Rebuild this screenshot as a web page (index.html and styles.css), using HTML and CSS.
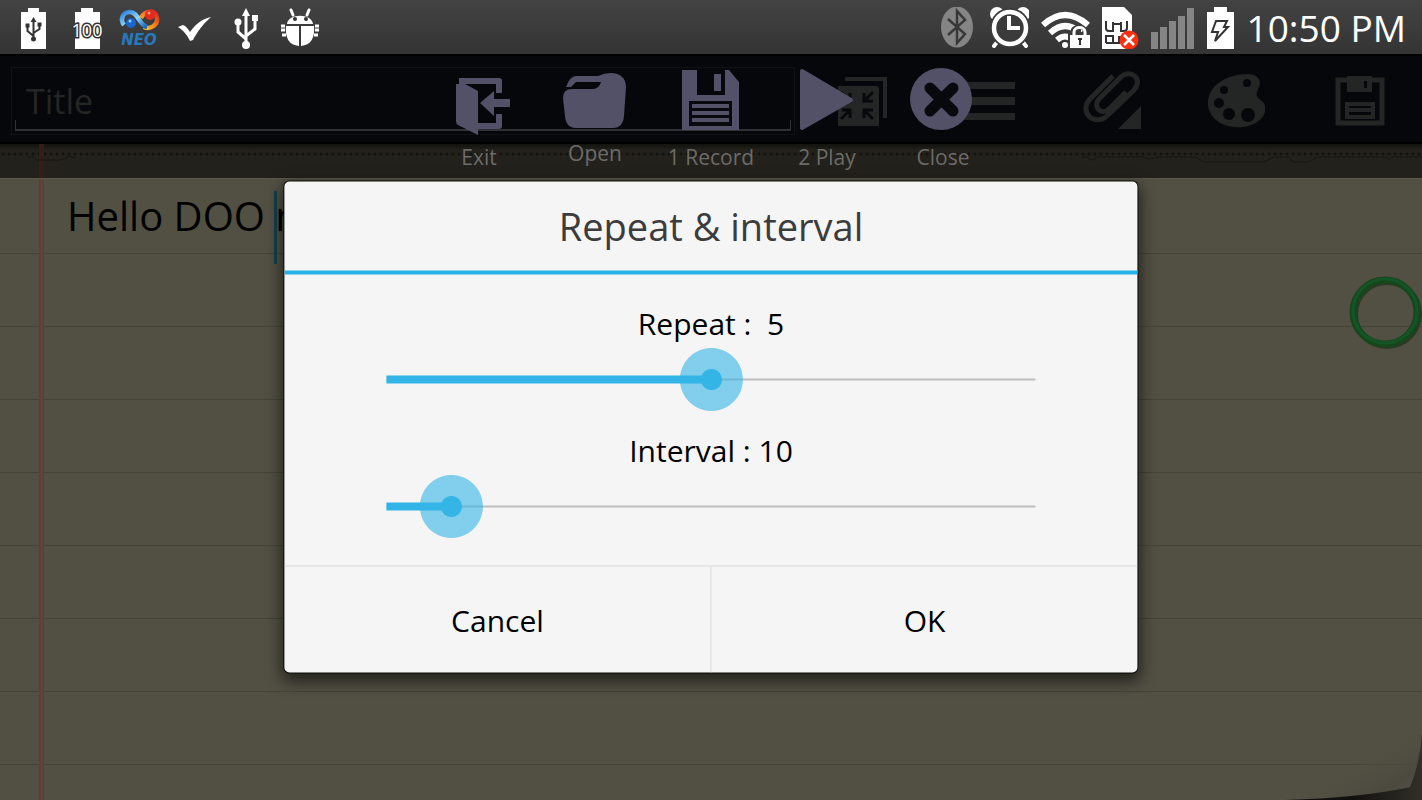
FILE: index.html
```
<!DOCTYPE html>
<html lang="en">
<head>
    <meta charset="UTF-8">
    <title>Repeat &amp; interval</title>
    <link rel="stylesheet" href="styles.css">
</head>
<body>

    <div class="status-bar">
        <div class="notifications">
            <svg width="53" height="42" viewBox="0 0 53 42">
                <path d="M21 1h11v4h7v37H14V5h7z" fill="#fff"/>
                <g stroke="#333" stroke-width="2" fill="none">
                    <path d="M26.500 13v19M26.500 29l-6-5v-5M26.500 26l6-4v-5"/>
                </g>
                <path d="M26.500 10l3 5h-6zM18.500 16.500h4v4h-4zM30.500 15.500h4v4h-4z" fill="#333"/>
                <circle cx="26.500" cy="32" r="2.500" fill="#333"/>
            </svg>
            <svg width="53" height="42" viewBox="0 0 53 42">
                <path d="M21 1h12v4h7v37H15V5h6z" fill="#fff"/>
                <text x="27" y="30" class="battery-text">100</text>
            </svg>
            <svg width="53" height="42" viewBox="0 0 53 42">
                <defs>
                    <linearGradient id="neoBlue" x1="0" y1="0" x2="1" y2="1">
                        <stop offset="0" stop-color="#2b7de0"/>
                        <stop offset="0.500" stop-color="#8fd8f5"/>
                        <stop offset="1" stop-color="#0b5fc0"/>
                    </linearGradient>
                    <linearGradient id="neoRed" x1="0" y1="1" x2="1" y2="0">
                        <stop offset="0" stop-color="#ffc928"/>
                        <stop offset="0.500" stop-color="#f58220"/>
                        <stop offset="1" stop-color="#e0201c"/>
                    </linearGradient>
                </defs>
                <path d="M28 11C32 3 43 2 44 11c1 7-7 12-13 9" fill="none" stroke="url(#neoRed)" stroke-width="4.500"/>
                <path d="M34 20C26 18 25 5 17 5 9 5 7 13 11 18" fill="none" stroke="url(#neoBlue)" stroke-width="4.500"/>
                <circle cx="18" cy="16" r="5" fill="#1767cc"/>
                <circle cx="37" cy="8" r="5" fill="#e52a1e"/>
                <circle cx="17" cy="14" r="1.500" fill="#8fd0ff"/>
                <circle cx="36" cy="6" r="1.500" fill="#ff9a80"/>
                <text x="26" y="38" class="neo-text">NEO</text>
            </svg>
            <svg width="53" height="42" viewBox="0 0 53 42">
                <path d="M12 20l5-2c3 1 5 4 7 7 5-7 11-13 21-15-7 6-14 15-18 23l-3 1c-3-6-6-10-12-14z" fill="#fff"/>
            </svg>
            <svg width="53" height="42" viewBox="0 0 53 42">
                <path d="M27 8v27M27 32l-8-7v-8M27 29l9-7v-9" fill="none" stroke="#fff" stroke-width="3"/>
                <path d="M27 1l4 8h-8zM33 8h6v6h-6z" fill="#fff"/>
                <circle cx="19" cy="15" r="3.500" fill="#fff"/>
                <circle cx="27" cy="38" r="4" fill="#fff"/>
            </svg>
            <svg width="53" height="42" viewBox="0 0 53 42">
                <path d="M15 17c1-11 25-11 26 0zM14 19h13v20C17 38 13 31 14 19zM29 19h13c1 12-3 19-13 20z" fill="#fff"/>
                <path d="M21 8l-2-5M35 8l2-5" stroke="#fff" stroke-width="3" stroke-linecap="round"/>
                <path d="M9 19h4M9 23h4M10 28h4M43 19h4M43 23h4M42 28h4" stroke="#fff" stroke-width="3"/>
                <circle cx="23" cy="12" r="2" fill="#333"/>
                <circle cx="34" cy="12" r="2" fill="#333"/>
            </svg>
        </div>
        <div class="system-icons">
            <svg width="35" height="42" viewBox="0 0 35 42">
                <ellipse cx="16" cy="20" rx="16" ry="20.500" fill="#858585"/>
                <path d="M7 12l17 15-8 9V4l8 9L7 28" fill="none" stroke="#383838" stroke-width="2.500"/>
            </svg>
            <svg width="41" height="42" viewBox="-1 1 41 42">
                <circle cx="8" cy="8" r="7" fill="#fff"/>
                <circle cx="34" cy="8" r="7" fill="#fff"/>
                <path d="M9 35l-4 5M33 35l4 5" stroke="#fff" stroke-width="4" stroke-linecap="round"/>
                <circle cx="21" cy="22" r="20" fill="#3b3b3b"/>
                <circle cx="21" cy="22" r="16" fill="none" stroke="#fff" stroke-width="4.500"/>
                <path d="M20 10v12h11" fill="none" stroke="#fff" stroke-width="4"/>
            </svg>
            <svg width="49" height="42" viewBox="0 0 49 42">
                <path d="M2 18Q24-2 47 18M9 26q15-14 31 0M16 33q8-7 16 0" fill="none" stroke="#fff" stroke-width="6"/>
                <circle cx="24" cy="38" r="3" fill="#fff"/>
                <path d="M27 25h3v-3q5-7 10-1v4h9v17H27z" fill="#3b3b3b"/>
                <path d="M33 29v-4c0-6 11-6 11 0v4" fill="none" stroke="#fff" stroke-width="3"/>
                <path d="M29 28h20v13H29z" fill="#fff"/>
                <path d="M37 32h4M39 32v6" stroke="#333" stroke-width="2"/>
            </svg>
            <svg width="37" height="42" viewBox="0 0 37 42">
                <path d="M0 0h22l8 8v34H0z" fill="#fff"/>
                <path d="M4 14v7q0 3 3 3h4v-9M9 15M11 17h8M25 14v7q0 3-3 3h-3v-9M4 36v-7h7v7H4M11 36h6v-6h5" fill="none" stroke="#333" stroke-width="2"/>
                <circle cx="27" cy="33" r="9.500" fill="#fa3110"/>
                <path d="M22 28l10 10M32 28L22 38" stroke="#fff" stroke-width="2.500"/>
            </svg>
            <svg width="44" height="42" viewBox="0 0 44 42">
                <path d="M0 25h7v17H0zM9 20h7v22H9zM18 14h7v28h-7zM27 9h7v33h-7zM36 1h7v41h-7z" fill="#858585"/>
            </svg>
            <svg width="27" height="42" viewBox="0 0 27 42">
                <path d="M7 0h13v5h7v37H0V5h7z" fill="#fff"/>
                <path d="M9 14h11l-3 6h4L8 34l3-9H5z" fill="none" stroke="#333" stroke-width="2"/>
            </svg>
            <span class="time">10:50 PM</span>
        </div>
    </div>

    <div class="app">
        <div class="app-bar">
            <div class="title-box">
                <input type="text" class="title-input" placeholder="Title" aria-label="Title">
            </div>
            <div class="app-actions">
                <button aria-label="Collapse">
                    <svg width="50" height="50" viewBox="2 0 50 50">
                        <path d="M2 10h38q3 0 3 3v35q0 3-3 3H4q-3 0-3-3V12z" fill="#242525"/>
                        <path d="M9 3h40v39" fill="none" stroke="#242525" stroke-width="4"/>
                        <path d="M5 16l8 8M14 17v8H6M37 16l-8 8M28 17v8h9M5 43l8-8M14 42v-8H6M37 43l-8-8M28 42v-8h9" fill="none" stroke="#08090c" stroke-width="3"/>
                    </svg>
                </button>
                <button aria-label="Menu">
                    <svg width="58" height="50" viewBox="0 0 58 50">
                        <path d="M5 6h52v7H5zM5 21h52v8H5zM5 37h52v7H5z" fill="#242525"/>
                    </svg>
                </button>
                <button aria-label="Attach">
                    <svg width="60" height="60" viewBox="0 0 60 60">
                        <path d="M31 5L8 28C-4 41 13 57 26 44l26-25C62 8 48-3 39 6L17 28c-7 8 3 17 10 10l17-17" fill="none" stroke="#242525" stroke-width="5"/>
                        <path d="M59 35v23H36z" fill="#242525"/>
                    </svg>
                </button>
                <button aria-label="Colours">
                    <svg width="58" height="58" viewBox="0 0 58 58">
                        <path fill-rule="evenodd" fill="#242525" d="M41 2c9 0 14 6 11 13-4 8-3 10 3 14 8 7 2 23-19 26C14 57 1 45 1 31 1 14 19 2 41 2zM40 7a4 4 0 1 0 0 8a4 4 0 1 0 0-8zM17 14a4 4 0 1 0 0 8a4 4 0 1 0 0-8zM12 26a5 5 0 1 0 0 10a5 5 0 1 0 0-10zM22 36a6 6 0 1 0 0 12a6 6 0 1 0 0-12zM41 36a7 7 0 1 0 0 14a7 7 0 1 0 0-14z"/>
                    </svg>
                </button>
                <button aria-label="Save">
                    <svg width="50" height="50" viewBox="0 0 50 50">
                        <path d="M13 4H3v43h44V4H36" fill="none" stroke="#242525" stroke-width="5"/>
                        <path fill-rule="evenodd" fill="#242525" d="M12 0h25v16H12zM29 5v7h3V5zM10 26h30v17H10zM14 30v2h22v-2zM14 36v3h22v-3z"/>
                    </svg>
                </button>
            </div>
        </div>

        <div class="torn-edge">
            <svg class="torn-left" width="60" height="6" viewBox="0 0 60 6">
                <path d="M0 1h6l4 3h24l9-4 4 2 3-2" fill="none" stroke="#161612"/>
            </svg>
            <svg class="torn-right" width="340" height="8" viewBox="0 0 340 8">
                <path d="M0 1h5l5 3 6-3h45l5 2 12-2h35l9 5h60l10-5h15l4 5h15l10-5h68l3 3 3-3h30" fill="none" stroke="#161612"/>
            </svg>
        </div>

        <div class="paper">
            <textarea class="note" aria-label="Note" spellcheck="false">Hello DOO n</textarea>
            <span class="caret"></span>
            <svg class="page-curl" width="192" height="100" viewBox="0 0 192 100">
                <defs>
                    <linearGradient id="curlLight" x1="0.600" y1="0.500" x2="1" y2="1">
                        <stop offset="0" stop-color="#525043" stop-opacity="0"/>
                        <stop offset="0.600" stop-color="#4c493f"/>
                        <stop offset="1" stop-color="#545452"/>
                    </linearGradient>
                    <linearGradient id="curlDark" x1="0" y1="0" x2="1" y2="0">
                        <stop offset="0" stop-color="#12110f"/>
                        <stop offset="0.500" stop-color="#12110f"/>
                        <stop offset="1" stop-color="#312f28"/>
                    </linearGradient>
                </defs>
                <path d="M55 100Q130 98 180 87Q190 63 192 33V0H100z" fill="url(#curlLight)"/>
                <path d="M55 100Q130 98 180 87Q190 63 192 33V100z" fill="url(#curlDark)"/>
            </svg>
            <svg class="ring" width="76" height="76" viewBox="0 0 76 76">
                <circle cx="39" cy="39" r="32" fill="none" stroke="#2c3a25" stroke-width="6"/>
                <circle cx="37" cy="37" r="32" fill="none" stroke="#14481a" stroke-width="7"/>
                <circle cx="37" cy="36" r="32" fill="none" stroke="#155427" stroke-width="3"/>
            </svg>
        </div>

        <div class="macro-bar">
            <button class="macro">
                <svg width="66" height="70" viewBox="0 0 66 70">
                    <path d="M13 13h40v12" fill="none" stroke="#525168" stroke-width="6" stroke-linejoin="round"/>
                    <path d="M53 46v12H30" fill="none" stroke="#525168" stroke-width="6" stroke-linejoin="round"/>
                    <path d="M10 12v4h9l13 7v44L12 57q-2-1-2-4z" fill="#525168"/>
                    <path d="M34 35l14-12v8h16v8H48v9z" fill="#525168"/>
                </svg>
                <span>Exit</span>
            </button>
            <button class="macro">
                <svg width="66" height="66" viewBox="0 0 66 66">
                    <path d="M4 19q4-11 10-11h22q6-3 13-3c9 0 15 5 15 14l-2 29q-1 12-11 12H14Q4 60 3 48L1 30q0-9 9-9h21q6 0 8-7H14l-5 5z" fill="#525168"/>
                </svg>
                <span>Open</span>
            </button>
            <button class="macro">
                <svg width="66" height="70" viewBox="0 0 66 70">
                    <path d="M4 2h15v25h28V2h4l10 12v48H4zM36 6v17h7V6z" fill="#525168"/>
                    <path d="M11 33h43v25H11z" fill="#08090c"/>
                    <path d="M14 38h37M14 45h37M14 52h37" stroke="#525168" stroke-width="4"/>
                </svg>
                <span>1 Record</span>
            </button>
            <button class="macro">
                <svg width="66" height="70" viewBox="0 0 66 70">
                    <path d="M8 3l49 29L8 60z" fill="#525168" stroke="#525168" stroke-width="4" stroke-linejoin="round"/>
                </svg>
                <span>2 Play</span>
            </button>
            <button class="macro">
                <svg width="66" height="70" viewBox="0 0 66 70">
                    <circle cx="31" cy="31" r="31" fill="#525168"/>
                    <path d="M20 20l23 23M43 20L20 43" stroke="#08090c" stroke-width="11" stroke-linecap="round"/>
                </svg>
                <span>Close</span>
            </button>
        </div>

        <div class="dialog" role="dialog" aria-labelledby="dialogTitle">
            <h1 id="dialogTitle">Repeat &amp; interval</h1>
            <div class="dialog-body">
                <label for="repeat">Repeat :  5</label>
                <input type="range" id="repeat" min="0" max="10" value="5" style="--fill: 0.5">
                <label for="interval">Interval : 10</label>
                <input type="range" id="interval" min="0" max="100" value="10" style="--fill: 0.1">
            </div>
            <div class="dialog-buttons">
                <button>Cancel</button>
                <button>OK</button>
            </div>
        </div>
    </div>

</body>
</html>
```
FILE: styles.css
```
* {
    box-sizing: border-box;
}

body {
    margin: 0;
    height: 100vh;
    display: flex;
    flex-direction: column;
    overflow: hidden;
    font-family: "Open Sans", "Noto Sans", sans-serif;
    background: #525043;
}

button {
    font-family: inherit;
    background: none;
    border: none;
    padding: 0;
    cursor: pointer;
}

svg {
    display: block;
    flex: none;
}

/* status bar */
.status-bar {
    height: 54px;
    flex: none;
    display: flex;
    justify-content: space-between;
    align-items: center;
    padding: 2px 16px 0 7px;
    background: linear-gradient(#434343, #343434);
}

.notifications {
    display: flex;
}

.system-icons {
    display: flex;
    align-items: center;
    gap: 12px;
}

.time {
    min-width: 160px;
    text-align: right;
    font-size: 37px;
    line-height: 42px;
    color: #fff;
    white-space: nowrap;
}

.battery-text {
    font-size: 18px;
    text-anchor: middle;
    fill: #fff;
    stroke: #333;
    stroke-width: 3px;
    paint-order: stroke;
}

.neo-text {
    font-family: "DejaVu Sans", sans-serif;
    font-size: 15px;
    font-weight: bold;
    font-style: italic;
    text-anchor: middle;
    fill: #2779bd;
}

/* app */
.app {
    flex: 1;
    position: relative;
    display: flex;
    flex-direction: column;
    min-height: 0;
}

.app-bar {
    height: 90px;
    flex: none;
    display: flex;
    align-items: center;
    padding: 3px 0 0 11px;
    background: #06070a;
    border-top: 2px solid #000;
    border-bottom: 2px solid #000;
}

.title-box {
    flex: 5;
    height: 68px;
    padding: 3px;
    border: 1px solid #111215;
}

.title-input {
    width: 100%;
    height: 60px;
    padding: 0 11px;
    border: none;
    background:
        linear-gradient(#303133, #303133) left bottom / 100% 2px no-repeat,
        linear-gradient(#303133, #303133) left bottom / 1px 11px no-repeat,
        linear-gradient(#303133, #303133) right bottom / 1px 11px no-repeat;
    color: #303030;
    font-family: inherit;
    font-size: 34px;
    outline: none;
}

.title-input::placeholder {
    color: #252525;
    opacity: 1;
}

.app-actions {
    flex: 4;
    display: flex;
    margin-left: 6px;
}

.app-actions button {
    flex: 1;
    display: flex;
    justify-content: center;
    align-items: center;
}

.torn-edge {
    height: 34px;
    flex: none;
    display: flex;
    justify-content: space-between;
    padding-top: 12px;
    background:
        linear-gradient(90deg, #3a1c19 0 2px, #2b211c 2px 3px, #351e1a 3px 5px) 39px 0 / 5px 100% no-repeat,
        radial-gradient(circle at 3px 3px, #131411 1px, transparent 2px) 0 7px / 6px 6px repeat-x,
        linear-gradient(#12120e, #22211b 6px, #22211b);
}

.torn-left {
    margin-left: 27px;
}

.paper {
    flex: 1;
    position: relative;
    border-top: 1px solid #5b594b;
    background:
        linear-gradient(90deg, #643c35 0 2px, #59493e 2px 3px, #603f37 3px 5px) 39px 0 / 5px 100% no-repeat,
        repeating-linear-gradient(transparent 0 72px, #45443a 72px 73px) 0 2px,
        #525043;
}

.note {
    display: block;
    width: 100%;
    height: 100%;
    padding: 0 67px;
    border: none;
    outline: none;
    resize: none;
    overflow: hidden;
    background: none;
    color: #000;
    font-family: inherit;
    font-size: 40px;
    line-height: 73px;
}

.caret {
    position: absolute;
    top: 12px;
    left: 274px;
    width: 3px;
    height: 73px;
    background: #133f4d;
}

.page-curl {
    position: absolute;
    right: 0;
    bottom: 0;
}

.ring {
    position: absolute;
    top: 96px;
    right: -2px;
}

/* floating macro buttons */
.macro-bar {
    position: absolute;
    top: 14px;
    left: 50%;
    transform: translateX(-50%);
    display: flex;
    align-items: flex-start;
}

.macro {
    width: 116px;
    display: flex;
    flex-direction: column;
    align-items: center;
    gap: 5px;
    color: #6c6b68;
    font-size: 21px;
    line-height: 28px;
}

/* dialog */
.dialog {
    position: absolute;
    top: 50%;
    left: 50%;
    transform: translate(-50%, -50%);
    width: 60%;
    background: #f5f5f5;
    border-radius: 5px;
    box-shadow: 0 0 0 1px #0c0c0a, 0 6px 16px 2px rgba(0, 0, 0, 0.6);
    overflow: hidden;
}

.dialog h1 {
    margin: 0;
    padding: 16px 0;
    border-bottom: 4px solid #27b2e6;
    text-align: center;
    font-size: 38px;
    font-weight: normal;
    line-height: 57px;
    color: #3c3c3c;
}

.dialog-body {
    display: flex;
    flex-direction: column;
    padding: 29px 70px 27px;
}

.dialog-body label {
    text-align: center;
    white-space: pre;
    font-size: 30px;
    line-height: 40px;
    color: #000;
}

.dialog-body input {
    -webkit-appearance: none;
    appearance: none;
    width: 100%;
    height: 64px;
    margin: 4px 0 19px;
    cursor: pointer;
    background:
        linear-gradient(#32b4e6, #32b4e6) 32px center / calc((100% - 64px) * var(--fill)) 8px no-repeat,
        linear-gradient(#bdbdbd, #bdbdbd) center / calc(100% - 64px) 2px no-repeat;
}

.dialog-body input:last-child {
    margin-bottom: 0;
}

.dialog-body input::-webkit-slider-thumb {
    -webkit-appearance: none;
    width: 64px;
    height: 64px;
    border-radius: 50%;
    background: radial-gradient(circle, #33b5e6 10px, rgba(51, 181, 230, 0.6) 11px 31px, transparent 32px);
}

.dialog-buttons {
    display: flex;
    border-top: 1px solid #d9d9d9;
}

.dialog-buttons button {
    flex: 1;
    height: 106px;
    font-size: 30px;
    color: #000;
}

.dialog-buttons button + button {
    border-left: 1px solid #d9d9d9;
}
```
